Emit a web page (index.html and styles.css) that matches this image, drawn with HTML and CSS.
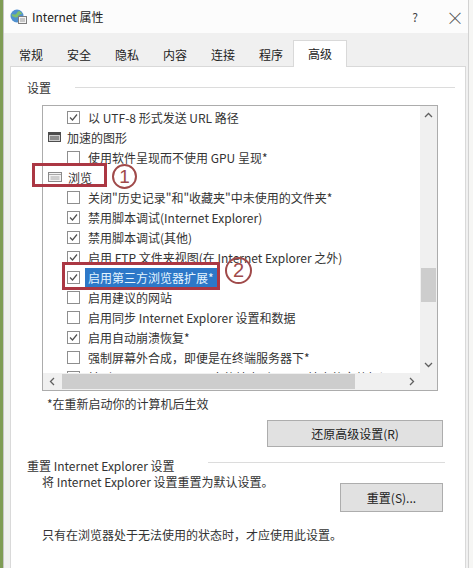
FILE: index.html
```html
<!DOCTYPE html>
<html lang="zh-CN">
<head>
    <meta charset="UTF-8">
    <title>Internet 属性</title>
    <link rel="stylesheet" href="styles.css">
</head>
<body>

<div class="desk"></div>

<div class="window">
    <div class="titlebar">
        <svg class="app-icon" width="17" height="15" viewBox="0 0 17 15">
            <circle cx="7" cy="7" r="6.5" fill="#4f90cf"/>
            <path d="M1.5 5.5c1.5-1 2.5 0.5 4 0s1.5-3 3.5-3.5c1.5 0.5 2.5 1.5 3 3-1 0.5-2 0-3 1s-1 2.5-3 2.5-2-1.5-3.5-1z" fill="#7fbf6a"/>
            <rect x="8.5" y="7.5" width="8" height="7" fill="#f4f4f4" stroke="#7d7d7d"/>
            <path d="M10 10h5M10 12h5" stroke="#9a9a9a"/>
        </svg>
        <span class="title">Internet 属性</span>
        <span class="help">?</span>
        <span class="close">×</span>
    </div>

    <div class="tabs">
        <div class="tab">常规</div>
        <div class="tab">安全</div>
        <div class="tab">隐私</div>
        <div class="tab">内容</div>
        <div class="tab">连接</div>
        <div class="tab">程序</div>
        <div class="tab active">高级</div>
    </div>

    <div class="panel">
        <div class="group-title">
            <span>设置</span>
            <i class="rule"></i>
        </div>

        <div class="listbox">
            <div class="items">
                <div class="row"><svg class="cb" viewBox="0 0 13 13"><rect x=".5" y=".5" width="12" height="12"/><polyline points="3,6.5 5.5,9 10,3.5"/></svg><span>以 UTF-8 形式发送 URL 路径</span></div>
                <div class="row cat">
                    <svg class="cat-icon" width="13" height="10" viewBox="0 0 13 10"><rect x=".5" y=".5" width="12" height="9" fill="#cfcfcf" stroke="#4d4d4d"/><rect x="1" y="1" width="11" height="2" fill="#4d4d4d"/><rect x="2" y="4" width="9" height="4" fill="#8c8c8c"/></svg>
                    <span>加速的图形</span>
                </div>
                <div class="row"><svg class="cb off" viewBox="0 0 13 13"><rect x=".5" y=".5" width="12" height="12"/></svg><span>使用软件呈现而不使用 GPU 呈现*</span></div>
                <div class="row cat">
                    <svg class="cat-icon" width="14" height="10" viewBox="0 0 14 10"><rect x=".5" y=".5" width="13" height="9" fill="#f3f3f3" stroke="#8a8a8a"/><path d="M1 2.5h12M2.5 5h9M2.5 7h9" stroke="#a8a8a8"/></svg>
                    <span>浏览</span>
                </div>
                <div class="row"><svg class="cb off" viewBox="0 0 13 13"><rect x=".5" y=".5" width="12" height="12"/></svg><span>关闭"历史记录"和"收藏夹"中未使用的文件夹*</span></div>
                <div class="row"><svg class="cb" viewBox="0 0 13 13"><rect x=".5" y=".5" width="12" height="12"/><polyline points="3,6.5 5.5,9 10,3.5"/></svg><span>禁用脚本调试(Internet Explorer)</span></div>
                <div class="row"><svg class="cb" viewBox="0 0 13 13"><rect x=".5" y=".5" width="12" height="12"/><polyline points="3,6.5 5.5,9 10,3.5"/></svg><span>禁用脚本调试(其他)</span></div>
                <div class="row"><svg class="cb" viewBox="0 0 13 13"><rect x=".5" y=".5" width="12" height="12"/><polyline points="3,6.5 5.5,9 10,3.5"/></svg><span>启用 FTP 文件夹视图(在 Internet Explorer 之外)</span></div>
                <div class="row"><svg class="cb" viewBox="0 0 13 13"><rect x=".5" y=".5" width="12" height="12"/><polyline points="3,6.5 5.5,9 10,3.5"/></svg><span class="selected">启用第三方浏览器扩展*</span></div>
                <div class="row"><svg class="cb off" viewBox="0 0 13 13"><rect x=".5" y=".5" width="12" height="12"/></svg><span>启用建议的网站</span></div>
                <div class="row"><svg class="cb off" viewBox="0 0 13 13"><rect x=".5" y=".5" width="12" height="12"/></svg><span>启用同步 Internet Explorer 设置和数据</span></div>
                <div class="row"><svg class="cb" viewBox="0 0 13 13"><rect x=".5" y=".5" width="12" height="12"/><polyline points="3,6.5 5.5,9 10,3.5"/></svg><span>启用自动崩溃恢复*</span></div>
                <div class="row"><svg class="cb off" viewBox="0 0 13 13"><rect x=".5" y=".5" width="12" height="12"/></svg><span>强制屏幕外合成，即便是在终端服务器下*</span></div>
                <div class="row"><svg class="cb off" viewBox="0 0 13 13"><rect x=".5" y=".5" width="12" height="12"/></svg><span>转到 Internet Explorer 中的站点时，显示站点的完整标识</span></div>
            </div>

            <div class="vbar">
                <div class="arrow"><svg width="9" height="6" viewBox="0 0 9 6"><polyline points="1,5 4.5,1.5 8,5"/></svg></div>
                <div class="track"><div class="thumb"></div></div>
                <div class="arrow"><svg width="9" height="6" viewBox="0 0 9 6"><polyline points="1,1 4.5,4.5 8,1"/></svg></div>
            </div>
            <div class="hbar">
                <div class="arrow"><svg width="6" height="9" viewBox="0 0 6 9"><polyline points="5,1 1.5,4.5 5,8"/></svg></div>
                <div class="track"><div class="thumb"></div></div>
                <div class="arrow"><svg width="6" height="9" viewBox="0 0 6 9"><polyline points="1,1 4.5,4.5 1,8"/></svg></div>
            </div>
            <div class="corner"></div>
        </div>

        <div class="footnote">*在重新启动你的计算机后生效</div>

        <div class="btn btn-restore">还原高级设置(R)</div>

        <div class="group-title reset">
            <span>重置 Internet Explorer 设置</span>
            <i class="rule"></i>
        </div>

        <div class="reset-row">
            <span>将 Internet Explorer 设置重置为默认设置。</span>
            <div class="btn btn-reset">重置(S)...</div>
        </div>

        <div class="note">只有在浏览器处于无法使用的状态时，才应使用此设置。</div>

        <!-- 标注 -->
        <div class="mark mark-1"></div>
        <div class="num num-1">1</div>
        <div class="mark mark-2"></div>
        <div class="num num-2">2</div>
    </div>
</div>

</body>
</html>
```

FILE: styles.css
```css
* {
    padding: 0;
    margin: 0;
    box-sizing: border-box;
}
body {
    width: 473px;
    height: 568px;
    overflow: hidden;
    display: flex;
    background: #f6f6f4;
    font-family: "Noto Sans CJK SC", "Liberation Sans", sans-serif;
    font-size: 12px;
    color: #333;
}
.desk {
    width: 3px;
    background: #7f9c55;
}
.window {
    width: 466px;
    display: flex;
    flex-direction: column;
    background: #f0f0f0;
    border-left: 1px solid #c6c6c6;
    border-right: 1px solid #d2d2d2;
}

/* 标题栏 */
.titlebar {
    height: 33px;
    display: flex;
    align-items: center;
    padding-left: 6px;
    background: #fcfcfc;
}
.titlebar .title {
    margin-left: 5px;
    font-size: 12px;
    color: #222;
}
.titlebar .help {
    margin-left: auto;
    width: 20px;
    margin-right: 17px;
    text-align: center;
    font-size: 12px;
    color: #444;
}
.titlebar .close {
    width: 26px;
    text-align: center;
    font-size: 18px;
    font-weight: 300;
    color: #555;
}

/* 选项卡 */
.tabs {
    height: 33px;
    display: flex;
    align-items: flex-end;
    padding-left: 3px;
}
.tab {
    height: 23px;
    line-height: 23px;
    padding: 0 12px;
    color: #222;
}
.tab.active {
    height: 27px;
    line-height: 25px;
    margin: 0 -2px -1px;
    padding: 0 14px;
    background: #fff;
    border: 1px solid #d9d9d9;
    border-bottom: none;
    position: relative;
    z-index: 1;
}

/* 面板 */
.panel {
    flex: 1;
    margin: 0 2px 0 6px;
    display: flex;
    flex-direction: column;
    background: #fff;
    border: 1px solid #d9d9d9;
    border-bottom: none;
    position: relative;
}
.group-title {
    height: 20px;
    margin-top: 10px;
    padding: 0 10px 0 16px;
    display: flex;
    align-items: center;
}
.group-title .rule {
    flex: 1;
    height: 1px;
    margin-left: 24px;
    background: #dcdcdc;
}
.group-title.reset {
    height: 16px;
    padding-right: 20px;
}
.group-title.reset .rule {
    margin-left: 33px;
    margin-top: -5px;
}

/* 列表框 */
.listbox {
    width: 396px;
    height: 286px;
    margin: 8px 0 0 31px;
    border: 1px solid #acacac;
    display: grid;
    grid-template-columns: 1fr 17px;
    grid-template-rows: 1fr 17px;
}
.items {
    overflow: hidden;
    padding-top: 1px;
}
.row {
    height: 20px;
    display: flex;
    align-items: center;
    padding-left: 24px;
    white-space: nowrap;
}
.row .cb {
    width: 13px;
    height: 13px;
    margin-right: 8px;
    flex: none;
}
.cb rect {
    fill: #fff;
    stroke: #8e8e8e;
}
.cb polyline {
    fill: none;
    stroke: #505050;
    stroke-width: 1.2;
}
.row.cat {
    padding-left: 5px;
}
.row .cat-icon {
    margin-right: 6px;
    flex: none;
}
.row .selected {
    height: 19px;
    line-height: 19px;
    margin-left: -3px;
    padding: 0 3px;
    background: #2d78c8;
    color: #e4f5ff;
}

/* 滚动条 */
.vbar, .hbar {
    display: flex;
    background: #f0f0f0;
}
.vbar {
    flex-direction: column;
}
.arrow {
    width: 17px;
    height: 17px;
    flex: none;
    display: flex;
    align-items: center;
    justify-content: center;
}
.arrow polyline {
    fill: none;
    stroke: #606060;
    stroke-width: 1.3;
}
.track {
    flex: 1;
}
.vbar .thumb {
    width: 15px;
    height: 34px;
    margin: 145px 0 0 1px;
    background: #cdcdcd;
}
.hbar .thumb {
    width: 293px;
    height: 15px;
    margin: 1px 0 0 2px;
    background: #cdcdcd;
}
.corner {
    background: #f0f0f0;
}

.footnote {
    line-height: 16px;
    margin: 5px 0 0 36px;
}

/* 按钮 */
.btn {
    text-align: center;
    background: #e1e1e1;
    border: 1px solid #adadad;
    color: #222;
}
.btn-restore {
    align-self: flex-end;
    width: 176px;
    height: 27px;
    line-height: 25px;
    margin: 8px 22px 0 0;
}
.reset-row {
    display: flex;
    justify-content: space-between;
    margin: 1px 22px 0 31px;
    line-height: 16px;
}
.btn-reset {
    width: 103px;
    height: 29px;
    line-height: 27px;
    margin-top: 9px;
}
.note {
    line-height: 16px;
    margin: 15px 0 0 31px;
}

/* 红框标注 */
.mark {
    position: absolute;
    border: 3px solid #ab3743;
}
.mark-1 {
    left: 21px;
    top: 96px;
    width: 75px;
    height: 24px;
}
.mark-2 {
    left: 51px;
    top: 195px;
    width: 158px;
    height: 28px;
}
.num {
    position: absolute;
    border: 2px solid #a04a4a;
    border-radius: 50%;
    text-align: center;
    color: #a04a4a;
    font-family: "Liberation Sans", sans-serif;
}
.num-1 {
    left: 101px;
    top: 97px;
    width: 25px;
    height: 25px;
    line-height: 21px;
    font-size: 19px;
}
.num-2 {
    left: 214px;
    top: 190px;
    width: 27px;
    height: 27px;
    line-height: 23px;
    font-size: 20px;
}
```
